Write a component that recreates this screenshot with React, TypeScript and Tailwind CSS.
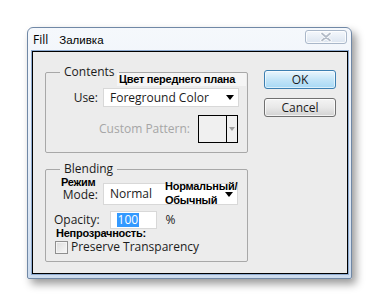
import React from "react";

function Arrow({ color = "#000" }: { color?: string }) {
  return (
    <svg width="8" height="5" viewBox="0 0 8 5" className="block">
      <path d="M0 0H8L4 5Z" fill={color} />
    </svg>
  );
}

function CloseBtn() {
  return (
    <div className="mt-[2px] mr-[1px] w-[42px] h-[14px] rounded-[3px] border border-[#a9b7c9] bg-gradient-to-b from-[#f5f8fc] to-[#dce5f0] flex items-center justify-center shadow-[inset_0_0_0_1px_rgba(255,255,255,0.8)]">
      <svg width="14" height="10" viewBox="0 0 14 10" className="block">
        <path d="M3 1.5L11 8.5M11 1.5L3 8.5" stroke="#ffffff" strokeWidth="3.4" strokeLinecap="round" />
        <path d="M3 1.5L11 8.5M11 1.5L3 8.5" stroke="#b3bcc8" strokeWidth="1.8" strokeLinecap="round" />
      </svg>
    </div>
  );
}

function Dropdown({ label, w, h }: { label: string; w: string; h: string }) {
  return (
    <div className={`${w} ${h} bg-white border border-[#d8d8d8] flex items-center justify-between pl-[6px] pr-[4px]`}>
      <span className="leading-[16px]">{label}</span>
      <Arrow />
    </div>
  );
}

function Button({ children, primary }: { children: React.ReactNode; primary?: boolean }) {
  return (
    <div
      className={
        primary
          ? "w-[72px] h-[19px] rounded-[3px] border border-[#3c7fb1] bg-gradient-to-b from-[#eaf6fd] via-[#c4e5f8] to-[#a7d9f5] flex items-center justify-center shadow-[inset_0_0_0_1px_rgba(255,255,255,0.6)]"
          : "w-[72px] h-[19px] rounded-[3px] border border-[#707070] bg-gradient-to-b from-[#f4f4f4] via-[#e8e8e8] to-[#d2d2d2] flex items-center justify-center shadow-[inset_0_0_0_1px_rgba(255,255,255,0.7)]"
      }
    >
      <span className="leading-[16px]">{children}</span>
    </div>
  );
}

export default function App() {
  return (
    <div className="w-[380px] h-[307px] bg-white pt-[27px] pl-[27px] font-['Open_Sans',sans-serif] text-[12px] text-[#1b1b1b]">
      <div className="w-[325px] h-[252px] rounded-t-[6px] rounded-b-[2px] border border-[#7088a6] bg-gradient-to-b from-[#f5f8fc] via-[#e8eff8] to-[#cddcee] shadow-[4px_5px_9px_rgba(0,0,0,0.4)] flex flex-col pl-[4px] pr-[3px] pb-[4px]">
        <div className="h-[23px] flex items-start justify-between">
          <div className="mt-[4px] ml-[1px] flex items-center h-[16px]">
            <span className="text-black leading-[16px]">Fill</span>
            <span className="ml-[11px] font-['Liberation_Sans',Arial,sans-serif] text-[11.5px] text-black leading-[16px]">Заливка</span>
          </div>
          <CloseBtn />
        </div>
        <div className="relative flex-1 border border-black bg-[#ececec] shadow-[0_0_0_1px_#8eabd1] flex">
          <div className="ml-[12px] flex flex-col">
            <fieldset className="mt-[12px] w-[203px] h-[89px] border border-[#a8a8a8] rounded-[2px] pt-[8px] pr-[8px] flex flex-col items-end">
              <legend className="ml-[14px] px-[4px] leading-[16px]">Contents</legend>
              <div className="flex items-center gap-[5px]">
                <span className="leading-[16px]">Use:</span>
                <Dropdown label="Foreground Color" w="w-[136px]" h="h-[19px]" />
              </div>
              <div className="mt-[8px] mr-[1px] flex items-center gap-[8px]">
                <span className="leading-[16px] text-[#a6a6a6]">Custom Pattern:</span>
                <div className="w-[40px] h-[28px] border border-black flex">
                  <div className="flex-1 bg-[#f0f0f0]" />
                  <div className="w-[11px] border-l border-black bg-[#f0f0f0] flex items-center justify-center">
                    <svg width="6" height="4" viewBox="0 0 6 4" className="block">
                      <path d="M0 0H6L3 4Z" fill="#a0a0a0" />
                    </svg>
                  </div>
                </div>
              </div>
            </fieldset>
            <fieldset className="mt-[8px] w-[203px] h-[101px] border border-[#a8a8a8] rounded-[2px] pt-[6px] flex flex-col">
              <legend className="ml-[14px] px-[4px] leading-[16px]">Blending</legend>
              <div className="pr-[9px] flex items-center justify-end gap-[5px]">
                <span className="leading-[16px] mt-[2px]">Mode:</span>
                <Dropdown label="Normal" w="w-[135px]" h="h-[22px]" />
              </div>
              <div className="mt-[6px] pl-[8px] flex items-center">
                <span className="leading-[16px]">Opacity:</span>
                <div className="ml-[10px] w-[47px] h-[18px] bg-white border border-[#d8d8d8] flex items-center pl-[6px]">
                  <span className="bg-[#3399ff] text-white leading-[14px] px-[1px]">100</span>
                </div>
                <span className="ml-[9px] leading-[16px]">%</span>
              </div>
              <div className="mt-[10px] pl-[9px] flex items-center gap-[3px]">
                <div className="w-[13px] h-[13px] border border-[#8f8f8f] bg-gradient-to-br from-[#dcdcdc] to-[#f8f8f8] shadow-[inset_0_0_0_1px_#f4f4f4]" />
                <span className="leading-[16px]">Preserve Transparency</span>
              </div>
            </fieldset>
          </div>
          <div className="ml-[16px] mt-[18px] flex flex-col gap-[9px]">
            <Button primary>OK</Button>
            <Button>Cancel</Button>
          </div>

          <div className="absolute left-[84px] top-[21px] w-[129px] h-[13px] bg-[#f5f5f5] pl-[2px] font-['Liberation_Sans',Arial,sans-serif] font-bold text-[11px] tracking-[-0.25px] leading-[13px] text-black whitespace-nowrap">
            Цвет переднего плана
          </div>
          <div className="absolute left-[28px] top-[124px] font-['Liberation_Sans',Arial,sans-serif] font-bold text-[11px] tracking-[-0.25px] leading-[13px] text-black">
            Режим
          </div>
          <div className="absolute left-[132px] top-[127px] font-['Liberation_Sans',Arial,sans-serif] font-bold text-[11px] tracking-[-0.25px] leading-[14px] text-black">
            Нормальный/
            <br />
            Обычный
          </div>
          <div className="absolute left-[23px] top-[175px] font-['Liberation_Sans',Arial,sans-serif] font-bold text-[11px] tracking-[-0.25px] leading-[13px] text-black">
            Непрозрачность:
          </div>
        </div>
      </div>
    </div>
  );
}
